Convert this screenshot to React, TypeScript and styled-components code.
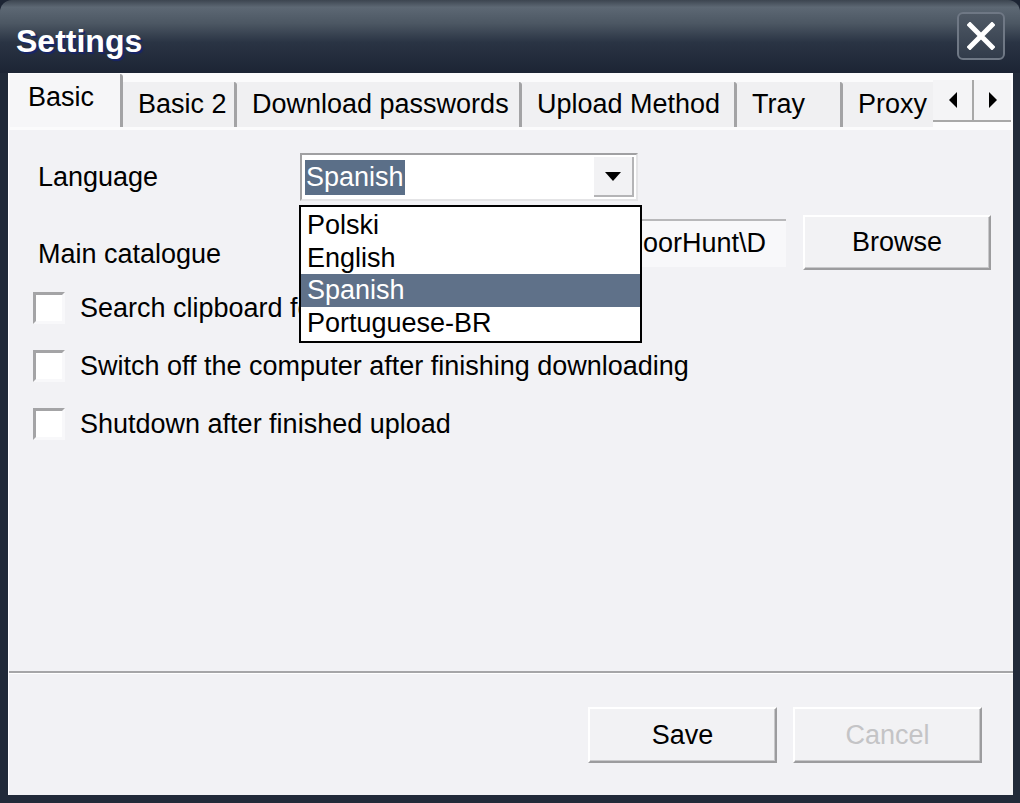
import { createGlobalStyle, styled } from "styled-components";

const FONT = `"Liberation Sans", Arial, sans-serif`;

const GlobalStyle = createGlobalStyle`
  html, body {
    margin: 0;
    padding: 0;
    background: #1d2534;
  }
  body {
    width: 1020px;
    height: 803px;
    overflow: hidden;
    font-family: ${FONT};
  }
`;

const tabs = [
  { label: "Basic", width: 113 },
  { label: "Basic 2", width: 114 },
  { label: "Download passwords", width: 285 },
  { label: "Upload Method", width: 215 },
  { label: "Tray", width: 106 },
  { label: "Proxy", width: 110 },
];

const languages = ["Polski", "English", "Spanish", "Portuguese-BR"];

const checks = [
  "Search clipboard for links",
  "Switch off the computer after finishing downloading",
  "Shutdown after finished upload",
];

const App: React.FC = () => {
  return (
    <>
      <GlobalStyle />
      <Window>
        <TitleBar>
          <Title>Settings</Title>
          <CloseBtn>
            <svg width="28" height="28" viewBox="0 0 28 28">
              <path
                d="M3 3 L25 25 M25 3 L3 25"
                stroke="#fff"
                strokeWidth="5"
                strokeLinecap="square"
              />
            </svg>
          </CloseBtn>
        </TitleBar>
        <Frame>
          <TabStrip>
            <TabsRow>
              {tabs.map((t, i) => (
                <Tab key={t.label} $w={t.width} $active={i === 0}>
                  {t.label}
                </Tab>
              ))}
            </TabsRow>
            <Arrows>
              <ArrowBtn>
                <svg width="10" height="16" viewBox="0 0 10 16">
                  <path d="M9 0 L1 8 L9 16 Z" fill="#000" />
                </svg>
              </ArrowBtn>
              <ArrowBtn>
                <svg width="10" height="16" viewBox="0 0 10 16">
                  <path d="M1 0 L9 8 L1 16 Z" fill="#000" />
                </svg>
              </ArrowBtn>
            </Arrows>
          </TabStrip>
          <Panel>
            <FieldRow>
              <Label>Language</Label>
              <Combo>
                <ComboText>
                  <Selected>Spanish</Selected>
                </ComboText>
                <DropBtn>
                  <svg width="16" height="9" viewBox="0 0 16 9">
                    <path d="M0 0 L16 0 L8 9 Z" fill="#000" />
                  </svg>
                </DropBtn>
              </Combo>
            </FieldRow>
            <FieldRow $top={14}>
              <Label $down={24}>Main catalogue</Label>
              <PathField>
                <span>C:\Program Files\DoorHunt\D</span>
              </PathField>
              <Button $w={188} $h={55}>
                Browse
              </Button>
            </FieldRow>
            <Checks>
              {checks.map((c) => (
                <CheckRow key={c}>
                  <CheckBox />
                  <span>{c}</span>
                </CheckRow>
              ))}
            </Checks>
            <DropList>
              {languages.map((l) => (
                <DropItem key={l} $active={l === "Spanish"}>
                  {l}
                </DropItem>
              ))}
            </DropList>
          </Panel>
          <Separator />
          <Footer>
            <Button $w={189} $h={56}>
              Save
            </Button>
            <Button $w={189} $h={56} $disabled>
              Cancel
            </Button>
          </Footer>
        </Frame>
      </Window>
    </>
  );
};
export default App;

const Window = styled.div`
  width: 1020px;
  height: 803px;
  box-sizing: border-box;
  display: flex;
  flex-direction: column;
  background: #212a39;
  border-radius: 12px 12px 0 0;
  overflow: hidden;
`;

const TitleBar = styled.div`
  height: 73px;
  flex: none;
  box-sizing: border-box;
  display: flex;
  align-items: center;
  justify-content: space-between;
  padding: 9px 14px 0 16px;
  background: linear-gradient(
    #3c4550 0,
    #5d6874 10%,
    #4c5763 32%,
    #2a3444 58%,
    #1c2434 100%
  );
`;

const Title = styled.div`
  font-family: "Liberation Sans", Arial, sans-serif;
  font-weight: bold;
  font-size: 32px;
  color: #fff;
  text-shadow: 2px 2px 1px #17256a;
`;

const CloseBtn = styled.div`
  width: 48px;
  height: 48px;
  box-sizing: border-box;
  margin-top: -10px;
  margin-right: 1px;
  border: 2px solid #6f7885;
  border-radius: 6px;
  background: linear-gradient(#4f5965, #323c4b);
  display: flex;
  align-items: center;
  justify-content: center;
`;

const Frame = styled.div`
  flex: 1;
  margin: 0 7px 8px 8px;
  border-left: 1px solid #fff;
  background: #f2f2f5;
  display: flex;
  flex-direction: column;
  min-height: 0;
`;

const TabStrip = styled.div`
  height: 57px;
  flex: none;
  box-sizing: border-box;
  display: flex;
  align-items: flex-end;
  background: #fbfbfc;
  padding: 0 2px 3px 1px;
`;

const TabsRow = styled.div`
  flex: 1;
  display: flex;
  align-items: flex-end;
  overflow: hidden;
  height: 100%;
`;

const Tab = styled.div<{ $w: number; $active?: boolean }>`
  flex: none;
  width: ${(p) => p.$w}px;
  height: ${(p) => (p.$active ? 53 : 45)}px;
  box-sizing: border-box;
  display: flex;
  align-items: center;
  padding: 0 0 ${(p) => (p.$active ? 6 : 0)}px ${(p) => (p.$active ? 18 : 15)}px;
  background: ${(p) => (p.$active ? "#f6f6f8" : "#f0f0f2")};
  border-right: 3px solid #a3a3a5;
  border-top-right-radius: 3px;
  font-size: 27px;
  color: #000;
  white-space: nowrap;
`;

const Arrows = styled.div`
  flex: none;
  display: flex;
  height: 40px;
  margin-bottom: 5px;
  border-bottom: 2px solid #a8a8a8;
`;

const ArrowBtn = styled.div`
  width: 39px;
  height: 40px;
  box-sizing: border-box;
  display: flex;
  align-items: center;
  justify-content: center;
  background: #f4f4f6;
  & + & {
    border-left: 2px solid #a8a8a8;
  }
`;

const Panel = styled.div`
  flex: 1;
  position: relative;
  padding-top: 23px;
  font-size: 27px;
`;

const FieldRow = styled.div<{ $top?: number }>`
  display: flex;
  align-items: center;
  margin-top: ${(p) => p.$top ?? 0}px;
  padding-left: 29px;
`;

const Label = styled.div<{ $down?: number }>`
  width: 262px;
  flex: none;
  padding-top: ${(p) => p.$down ?? 0}px;
  white-space: nowrap;
`;

const Combo = styled.div`
  width: 338px;
  height: 48px;
  box-sizing: border-box;
  display: flex;
  align-items: center;
  background: #fff;
  border: 2px solid;
  border-color: #a0a0a2 #e4e4e6 #e4e4e6 #a0a0a2;
  padding: 0 2px 0 3px;
`;

const ComboText = styled.div`
  flex: 1;
  display: flex;
  align-items: center;
`;

const Selected = styled.span`
  background: #5b6f88;
  color: #fff;
  padding: 0 1px;
  line-height: 35px;
`;

const DropBtn = styled.div`
  width: 40px;
  height: 40px;
  box-sizing: border-box;
  display: flex;
  align-items: center;
  justify-content: center;
  background: #f2f2f4;
  border-right: 2px solid #b4b4b6;
  border-bottom: 2px solid #b4b4b6;
`;

const PathField = styled.div`
  width: 486px;
  height: 48px;
  box-sizing: border-box;
  display: flex;
  align-items: center;
  justify-content: flex-end;
  overflow: hidden;
  white-space: nowrap;
  background: #f8f8fa;
  border-top: 2px solid #b8b8ba;
  padding-right: 20px;
  margin-right: 17px;
`;

const Button = styled.div<{ $w: number; $h: number; $disabled?: boolean }>`
  width: ${(p) => p.$w}px;
  height: ${(p) => p.$h}px;
  box-sizing: border-box;
  flex: none;
  display: flex;
  align-items: center;
  justify-content: center;
  background: #f2f2f4;
  border: 2px solid;
  border-color: #ffffff #9c9c9e #9c9c9e #ffffff;
  box-shadow: inset -1px -1px 0 #c8c8ca;
  color: ${(p) => (p.$disabled ? "#c4c4c6" : "#000")};
  font-size: 27px;
`;

const Checks = styled.div`
  margin-top: 9px;
  display: flex;
  flex-direction: column;
`;

const CheckRow = styled.div`
  height: 58px;
  display: flex;
  align-items: center;
  gap: 15px;
  padding-left: 24px;
  white-space: nowrap;
`;

const CheckBox = styled.div`
  width: 32px;
  height: 32px;
  box-sizing: border-box;
  flex: none;
  background: #fff;
  border: 3px solid;
  border-color: #a4a4a6 #f8f8fa #f8f8fa #a4a4a6;
`;

const DropList = styled.div`
  position: absolute;
  left: 290px;
  top: 75px;
  width: 343px;
  box-sizing: border-box;
  background: #fff;
  border: 2px solid #000;
  padding: 2px 0;
`;

const DropItem = styled.div<{ $active?: boolean }>`
  height: 32.5px;
  line-height: 32.5px;
  padding-left: 6px;
  background: ${(p) => (p.$active ? "#5f7189" : "transparent")};
  color: ${(p) => (p.$active ? "#fff" : "#000")};
`;

const Separator = styled.div`
  height: 3px;
  flex: none;
  background: linear-gradient(#a6a6a8 0, #a6a6a8 66%, #ffffff 66%);
`;

const Footer = styled.div`
  height: 121px;
  flex: none;
  box-sizing: border-box;
  display: flex;
  justify-content: flex-end;
  align-items: flex-start;
  gap: 16px;
  padding: 33px 31px 0 0;
`;
